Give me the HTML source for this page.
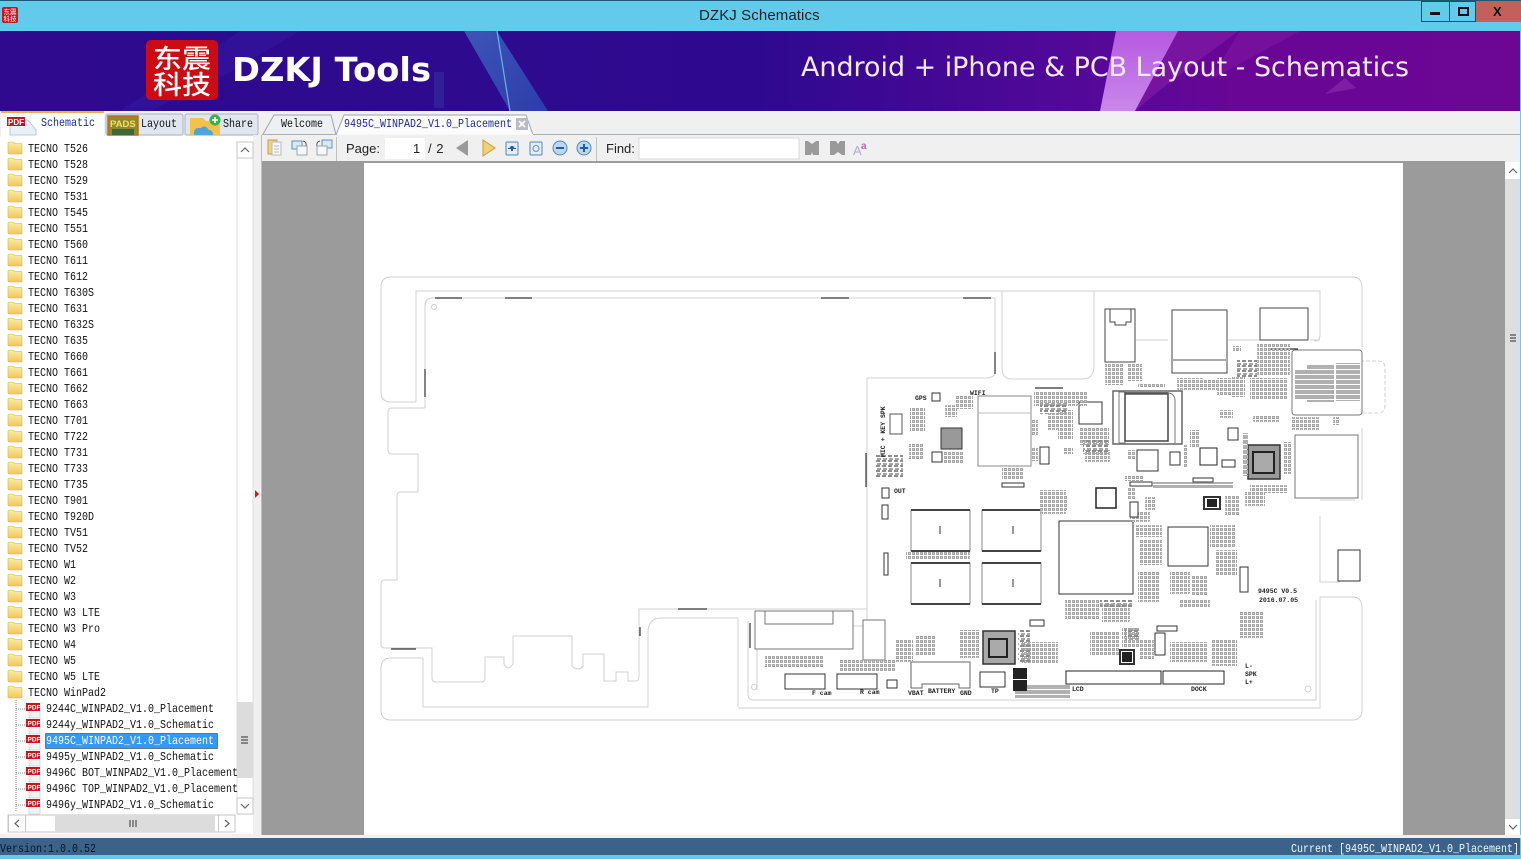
<!DOCTYPE html>
<html><head><meta charset="utf-8"><title>DZKJ Schematics</title>
<style>
html,body{margin:0;padding:0;width:1521px;height:859px;overflow:hidden;background:#f0f0f0}
body{position:relative;font-family:"Liberation Mono","Noto Sans CJK SC",monospace}
.a{position:absolute}
.t{position:absolute;margin-top:2px;font:10px/16px "Liberation Mono",monospace;color:#111;white-space:pre;transform-origin:0 50%;transform:scaleY(1.15)}
svg{position:absolute;left:0;top:0}
</style></head><body>

<div class="a" style="left:0;top:0;width:1521px;height:31px;background:#62cbec;border-top:1px solid #1b5a72;box-sizing:border-box"></div>
<div class="a" style="left:0;top:31px;width:1520px;height:80px;background:linear-gradient(90deg,#2f0a8e 0%,#2d0a8e 30%,#2e0990 50%,#520898 70%,#6a0696 82%,#6b0695 100%)"></div>
<div class="a" style="left:699px;top:6px;font:15px/20px 'Liberation Sans',sans-serif;letter-spacing:.1px;color:#222">DZKJ Schematics</div>

<svg width="1521" height="859" viewBox="0 0 1521 859">
<defs>
<linearGradient id="fold" x1="0" y1="0" x2="0" y2="1"><stop offset="0" stop-color="#fdeea8"/><stop offset="1" stop-color="#f1c75a"/></linearGradient>
<linearGradient id="beam" x1="0" y1="0" x2="1" y2="1"><stop offset="0" stop-color="#4d9fe0"/><stop offset="1" stop-color="#2c6fc8"/></linearGradient>
<linearGradient id="pink" x1="0" y1="0" x2="0" y2="1"><stop offset="0" stop-color="#b65ae0"/><stop offset="1" stop-color="#c987ea"/></linearGradient>
<pattern id="p1" width="6" height="5" patternUnits="userSpaceOnUse"><rect x="0" y="0" width="4" height="2" fill="#8c8c8c"/><rect x="1" y="3" width="4" height="2" fill="#a5a5a5"/></pattern>
<pattern id="p3" width="4" height="5" patternUnits="userSpaceOnUse"><rect x="0" y="0" width="4" height="4" fill="#b0b0b0"/></pattern>
<pattern id="p4" width="4" height="4" patternUnits="userSpaceOnUse"><rect x="0" y="0" width="3" height="3" fill="#a6a6a6"/><rect x="1" y="1" width="1" height="1" fill="#d4d4d4"/></pattern>
<g id="folder"><path d="M0 3.5 Q0 2 1.5 2 H5 L6.5 3.5 H13 Q14 3.5 14 5 V13 Q14 14 13 14 H1 Q0 14 0 13Z" fill="url(#fold)" stroke="#d9b04d" stroke-width=".6"/></g>
<g id="pdf"><rect x="3" y="5" width="11" height="10" fill="#eef3f8" stroke="#b8c8d8" stroke-width=".6"/><rect x="0" y="0" width="14" height="8" fill="#c9141c"/><text x="1.5" y="6.5" font-family="Liberation Sans" font-size="6.5" font-weight="700" fill="#fff">PDF</text></g>
</defs>

<!-- banner art -->
<path d="M240 31 L300 31 L225 75 L150 111 H120Z" fill="#3a1fb0" opacity=".35"/>
<path d="M464 31 H497 L548 111 H510Z" fill="url(#beam)" opacity=".5"/>
<path d="M497 31 L510 111" stroke="#6fd2f0" stroke-width="1.2" fill="none" opacity=".8"/>
<path d="M434 72 h10 v36 h-10z" fill="#3f7fc8" opacity=".18"/>
<path d="M1116 31 H1178 L1135 111 H1100Z" fill="url(#pink)"/>
<path d="M1178 31 H1238 L1160 90 L1135 111Z" fill="#8b1fa8" opacity=".55"/>
<path d="M1240 31 H1300 L1210 80Z" fill="#8b1fa8" opacity=".4"/>
<path d="M1325 94 L1345 78 L1356 88Z" fill="#8c2eb0" opacity=".6"/>

<!-- logo -->
<rect x="146" y="40" width="72" height="60" rx="5" fill="#cc0b12"/>
<text x="153" y="68" font-family="Noto Sans CJK SC" font-size="26" font-weight="500" fill="#fff" textLength="58" lengthAdjust="spacingAndGlyphs">东震</text>
<text x="153" y="94" font-family="Noto Sans CJK SC" font-size="26" font-weight="500" fill="#fff" textLength="58" lengthAdjust="spacingAndGlyphs">科技</text>
<text x="232" y="81" font-family="DejaVu Sans" font-size="33" font-weight="700" fill="#fff" textLength="199" lengthAdjust="spacingAndGlyphs">DZKJ Tools</text>
<text x="801" y="76" font-family="DejaVu Sans" font-size="27" fill="#f4eafc" textLength="608" lengthAdjust="spacingAndGlyphs">Android + iPhone &amp; PCB Layout - Schematics</text>

<!-- window controls -->
<rect x="1421.5" y="1.5" width="28" height="20" fill="#62cbec" stroke="#1b4f63"/>
<rect x="1449.5" y="1.5" width="26" height="20" fill="#62cbec" stroke="#1b4f63"/>
<rect x="1476" y="1" width="45" height="21" fill="#c4605a"/>
<rect x="1430" y="12" width="10" height="3" fill="#111"/>
<rect x="1459" y="8" width="9" height="7" fill="none" stroke="#111" stroke-width="2"/>
<text x="1493" y="16" font-family="Liberation Sans" font-size="13" font-weight="700" fill="#111">X</text>
<!-- small app icon -->
<rect x="2" y="7" width="16" height="16" rx="2" fill="#c9141c"/>
<text x="3.5" y="14" font-family="Noto Sans CJK SC" font-size="6.5" fill="#fff">东震</text>
<text x="3.5" y="21" font-family="Noto Sans CJK SC" font-size="6.5" fill="#fff">科技</text>

<!-- left tabs -->
<rect x="106" y="114" width="77" height="21" rx="2" fill="#dfe6ef" stroke="#a9b4c0"/>
<rect x="185" y="114" width="73" height="21" rx="2" fill="#dfe6ef" stroke="#a9b4c0"/>
<rect x="1" y="112" width="103" height="24" fill="#fff"/>
<rect x="1" y="111" width="103" height="2" fill="#f0b040"/>
<path d="M10 120 H28 L36 130 V135 H10Z" fill="#e8eff6" stroke="#b8c8d8"/>
<rect x="7" y="117" width="18" height="9" fill="#c9141c"/>
<text x="8" y="125" font-family="Liberation Sans" font-size="8" font-weight="700" fill="#fff">PDF</text>
<rect x="108" y="116" width="30" height="19" fill="#8f8a30" stroke="#c56a18" stroke-width="1.5"/>
<text x="110" y="127" font-family="Liberation Sans" font-size="9.5" font-weight="700" fill="#f5e060">PADS</text>
<rect x="112" y="129" width="22" height="6" fill="#3a6a3a"/>
<path d="M190 118 H203 L206 121 H220 V135 H190Z" fill="#f3c24a"/>
<path d="M194 135 Q193 127 201 128 Q205 124 209 130 Q213 130 213 135Z" fill="#4ba6e0"/>
<circle cx="215" cy="120" r="5.5" fill="#3fae4c"/><path d="M212 120h6M215 117v6" stroke="#fff" stroke-width="1.6"/>

<!-- doc tabs -->
<path d="M262.5 135 L274 115 H331 L336 135" fill="#eef1f4" stroke="#9aa5b0"/>
<path d="M336 135 L344 115 H526 L533 135" fill="#fbfbfb" stroke="#9aa5b0"/>
<rect x="516" y="118" width="12" height="12" fill="#b6bcc4"/><path d="M519 121l6 6M525 121l-6 6" stroke="#fff" stroke-width="1.6"/>
<rect x="262" y="134" width="1259" height="1" fill="#a8b0b8"/>
<rect x="337" y="134" width="196" height="1" fill="#f6f6f6"/>

<!-- toolbar icons -->
<g fill="none">
<rect x="268" y="140" width="9" height="14" fill="#f3d184" stroke="#c99a40"/><rect x="272" y="142" width="9" height="13" fill="#f4f6f8" stroke="#b5bcc4"/><path d="M274 146h5M274 149h5M274 152h5" stroke="#b5bcc4"/>
<rect x="292" y="141" width="10" height="8" fill="#d7e8f7" stroke="#5e8fb8"/><rect x="297" y="146" width="10" height="9" fill="#f5f6f8" stroke="#9aa5b0"/><path d="M303 141q4 1 3 5" stroke="#555"/>
<rect x="322" y="140" width="10" height="8" fill="#d7e8f7" stroke="#5e8fb8"/><rect x="317" y="146" width="10" height="9" fill="#f5f6f8" stroke="#9aa5b0"/><path d="M320 141q-4 1 -3 5" stroke="#555"/>
<path d="M336.5 137v24" stroke="#c3c3c3"/>
<path d="M596.5 137v24" stroke="#c3c3c3"/>
</g>
<rect x="385" y="138" width="40" height="21" fill="#fff"/>
<path d="M468 140 V156 L456 148Z" fill="#9a9a9a"/>
<path d="M483 140 V156 L495 148Z" fill="#f1d27a" stroke="#c79a2e"/>
<rect x="506" y="142" width="12" height="13" rx="1" fill="#e3edf7" stroke="#4e86bd"/><path d="M508 148.5h3l-1-2M516 148.5h-3l1-2" stroke="#1f5fa0" fill="none"/><rect x="511" y="146" width="2" height="5" fill="#1f5fa0"/>
<rect x="530" y="142" width="12" height="13" rx="1" fill="#e3edf7" stroke="#4e86bd"/><circle cx="536" cy="148.5" r="3" fill="none" stroke="#5e8fb8"/>
<circle cx="560" cy="148" r="7" fill="#bcd6ec" stroke="#4e86bd"/><rect x="556" y="147" width="8" height="2" fill="#1c5fa8"/>
<circle cx="584" cy="148" r="7" fill="#bcd6ec" stroke="#4e86bd"/><path d="M580 148h8M584 144v8" stroke="#1c5fa8" stroke-width="2"/>
<rect x="639" y="138" width="160" height="21" fill="#fff" stroke="#d8d8d8"/>
<path d="M805 141 h3 l4 3 l4 -3 h3 v14 h-6 l-1 -3 l-1 3 h-6z" fill="#9a9a9a"/>
<path d="M830 141 h6 l2 3 l2 -3 h5 v14 h-3 l-4 -3 l-4 3 h-4z" fill="#9a9a9a"/>
<text x="853" y="155" font-family="Liberation Sans" font-size="13" fill="#b9a4de">A</text>
<text x="861" y="149" font-family="Liberation Sans" font-size="10" font-weight="700" fill="#c65fb8">a</text>

<!-- content area -->
<rect x="262" y="161" width="1243" height="674" fill="#9b9b9b"/>
<rect x="364" y="163" width="1039" height="672" fill="#fff"/>
<rect x="1505" y="162" width="15" height="673" fill="#dedede"/>
<rect x="1505" y="162" width="15" height="17" fill="#fff"/>
<rect x="1505" y="819" width="15" height="16" fill="#fff"/>
<path d="M1509 173l4-4 4 4M1509 825l4 4 4-4" fill="none" stroke="#666" stroke-width="1.2"/>
<path d="M1510 335h6M1510 338h6M1510 341h6" stroke="#666" stroke-width="1.5"/>
<rect x="1520" y="31" width="1" height="828" fill="#62cbec"/>

<!-- left panel -->
<rect x="0" y="136" width="253" height="698" fill="#fff"/>
<rect x="253" y="135" width="8" height="700" fill="#f0f0f0"/>
<path d="M255 490l4 4 -4 4z" fill="#d8121a"/>
<rect x="261" y="135" width="1" height="700" fill="#bfbfbf"/>

<!-- tree scrollbars -->
<rect x="237" y="142" width="16" height="672" fill="#fff" stroke="#dcdcdc"/>
<rect x="237" y="142" width="16" height="16" fill="#fff" stroke="#c6c6c6"/>
<rect x="237" y="702" width="16" height="76" fill="#dcdcdc"/>
<rect x="237" y="798" width="16" height="16" fill="#fff" stroke="#c6c6c6"/>
<path d="M241 152l4-4 4 4M241 804l4 4 4-4" fill="none" stroke="#666" stroke-width="1.2"/>
<path d="M241 737h7M241 740h7M241 743h7" stroke="#666" stroke-width="1.4"/>
<rect x="8" y="815" width="227" height="17" fill="#fff" stroke="#c6c6c6"/>
<rect x="55" y="815" width="160" height="17" fill="#dcdcdc"/>
<path d="M8.5 815v17M25.5 815v17M218.5 815v17" stroke="#c6c6c6"/>
<path d="M19 820l-4 3.5 4 3.5M225 820l4 3.5 -4 3.5" fill="none" stroke="#666" stroke-width="1.2"/>
<path d="M130 820v7M133 820v7M136 820v7" stroke="#666" stroke-width="1.4"/>

<!-- folders -->
<g transform="translate(0,-1)">
<use href="#folder" x="8" y="141"/><use href="#folder" x="8" y="157"/><use href="#folder" x="8" y="173"/><use href="#folder" x="8" y="189"/><use href="#folder" x="8" y="205"/><use href="#folder" x="8" y="221"/><use href="#folder" x="8" y="237"/><use href="#folder" x="8" y="253"/><use href="#folder" x="8" y="269"/><use href="#folder" x="8" y="285"/><use href="#folder" x="8" y="301"/><use href="#folder" x="8" y="317"/><use href="#folder" x="8" y="333"/><use href="#folder" x="8" y="349"/><use href="#folder" x="8" y="365"/><use href="#folder" x="8" y="381"/><use href="#folder" x="8" y="397"/><use href="#folder" x="8" y="413"/><use href="#folder" x="8" y="429"/><use href="#folder" x="8" y="445"/><use href="#folder" x="8" y="461"/><use href="#folder" x="8" y="477"/><use href="#folder" x="8" y="493"/><use href="#folder" x="8" y="509"/><use href="#folder" x="8" y="525"/><use href="#folder" x="8" y="541"/><use href="#folder" x="8" y="557"/><use href="#folder" x="8" y="573"/><use href="#folder" x="8" y="589"/><use href="#folder" x="8" y="605"/><use href="#folder" x="8" y="621"/><use href="#folder" x="8" y="637"/><use href="#folder" x="8" y="653"/><use href="#folder" x="8" y="669"/><use href="#folder" x="8" y="685"/>
</g>
<path d="M16 700V812M16 709h10M16 725h10M16 741h10M16 757h10M16 773h10M16 789h10M16 805h10" stroke="#888" stroke-dasharray="1 1" fill="none"/>
<use href="#pdf" x="26" y="703"/><use href="#pdf" x="26" y="719"/><use href="#pdf" x="26" y="735"/><use href="#pdf" x="26" y="751"/><use href="#pdf" x="26" y="767"/><use href="#pdf" x="26" y="783"/><use href="#pdf" x="26" y="799"/>
<rect x="45.5" y="733.5" width="172" height="15" fill="#3399ff" stroke="#222" stroke-dasharray="1 1"/>

<!-- status -->
<rect x="0" y="838" width="1520" height="17" fill="#3c6289"/>
<rect x="0" y="855" width="1521" height="4" fill="#62cbec"/>
<rect x="0" y="835" width="1521" height="3" fill="#f0f0f0"/>

<!-- PCB outlines -->
<g fill="none" stroke="#d0d0d0" stroke-width="1">
<path d="M416 402 H391 Q381 402 381 392 V287 Q381 277 391 277 H1352 Q1362 277 1362 287 V347"/>
<path d="M416 402 V291 H1320 V335 Q1320 341 1314 341"/>
<path d="M425 408 V306 Q425 298 433 298 H995 V372 Q995 378 985 378 H867"/>
<path d="M1002 291 V368 Q1002 379 1012 379 H1082 Q1094 379 1094 366 V291"/>
<path d="M425 408 H392 Q388 408 388 412 V450 Q388 454 392 454 H418 V492 H401 Q397 492 397 496 V580 H385 Q381 580 381 584 V644 Q381 648 385 648 H432 V678 Q432 682 436 682 H481 Q485 682 485 678 V657 H504 V664 Q508 672 513 664 V636 H572 V666 Q578 672 583 666 V654 H604 V681 H616 V672 H628 V681 H636 Q639 681 639 676 V609 H867"/>
<path d="M423 658 H391 Q381 658 381 668 V710 Q381 720 391 720 H1352 Q1362 720 1362 710 V607 Q1362 597 1352 597 H1320 V708 H738"/>
<path d="M423 658 V707 H648 V630 Q650 618 660 618 H738 V707"/>
<path d="M867 378 V620 Q867 626 860 626 H757 V690"/>
<path d="M1320 516 V582 H1340 M1320 500 H1355"/>
<path d="M1362 500 V428"/>
<path d="M1360 361 H1378 Q1385 361 1385 368 V405 Q1385 413 1378 413 H1360" stroke-dasharray="4 2"/>
<path d="M1136 340 H1168 M1228 340 H1260 M1310 340 H1320"/>
<path d="M748 621 V694 Q748 700 754 700 H1316 V600"/>
<circle cx="434" cy="307" r="2.5"/><circle cx="1308" cy="689" r="3"/>
<circle cx="754" cy="687" r="2.5"/>
</g>
<g stroke="#333" stroke-width="1.2" fill="none">
<path d="M435 298h27M505 298h27M821 298h28M963 298h28M425 369v28M995 352v22M391 649h25M678 609h29M640 627v9M866 453v34M750 623v25M1035 388h28M1271 349h27"/>
</g>

<!-- PCB major -->
<g fill="#fff" stroke="#444" stroke-width="1">
<rect x="978" y="396" width="53" height="70" stroke="#888"/><path d="M978 413H1031" stroke="#bbb"/>
<rect x="1248" y="445" width="32" height="34" fill="#9a9a9a" stroke="#333" stroke-width="1.5"/>
<rect x="1253" y="452" width="21" height="21" fill="#aaa" stroke="#222" stroke-width="2"/>
<rect x="1059" y="521" width="74" height="73" stroke="#333"/>
<rect x="1168" y="527" width="40" height="39" stroke="#333"/>
<rect x="911" y="510" width="59" height="41" stroke="#888"/><path d="M911 510H970M911 551H970" stroke="#444" stroke-width="2"/>
<rect x="982" y="510" width="59" height="41" stroke="#888"/><path d="M982 510H1041M982 551H1041" stroke="#444" stroke-width="2"/>
<rect x="911" y="563" width="59" height="41" stroke="#888"/><path d="M911 563H970M911 604H970" stroke="#444" stroke-width="2"/>
<rect x="982" y="563" width="59" height="41" stroke="#888"/><path d="M982 563H1041M982 604H1041" stroke="#444" stroke-width="2"/>
<path d="M940 526v8M1013 526v8M940 579v8M1013 579v8" stroke="#999" stroke-width="2"/>
<rect x="1113" y="391" width="69" height="53" stroke="#666" stroke-width="1.5"/>
<rect x="1119" y="392" width="6" height="51" stroke="#777"/>
<rect x="1125" y="393" width="43" height="48" stroke="#444" stroke-width="1.5"/>
<path d="M1125 393.5H1168" stroke="#555" stroke-width="2.5"/>
<path d="M1168 393 Q1174 393 1175 400 V443" stroke="#777" fill="none"/>
<path d="M1105 309 H1135 V362 H1105Z M1110 309 V322 H1115 V325 H1126 V322 H1131 V309" />
<rect x="1172" y="310" width="55" height="63"/>
<path d="M1172 360 H1227" stroke="#aaa" stroke-width="2"/>
<rect x="1260" y="308" width="48" height="32"/>
<rect x="1292" y="350" width="70" height="65" rx="3" stroke="#777"/>
<path d="M1295 435 H1358 V498 H1295Z" stroke="#777"/>
<rect x="1338" y="550" width="22" height="31" stroke="#333"/>
<rect x="1096" y="488" width="20" height="20" stroke="#222" stroke-width="1.5"/>
<rect x="1066" y="671" width="95" height="13" stroke="#222"/>
<rect x="1163" y="671" width="61" height="13" stroke="#222"/>
<path d="M911 662 H970 V688 H959 V684 H922 V688 H911Z" stroke="#666"/>
<rect x="755" y="611" width="98" height="38" stroke="#777"/>
<rect x="765" y="611" width="68" height="13" stroke="#777"/>
<path d="M863 620 H885 V660 H863Z" stroke="#777"/>
<rect x="983" y="631" width="32" height="33" fill="#a8a8a8" stroke="#333" stroke-width="1.5"/>
<rect x="989" y="639" width="18" height="18" fill="#aaa" stroke="#222" stroke-width="2"/>
<rect x="1079" y="402" width="23" height="22" stroke="#333"/>
<rect x="1137" y="450" width="21" height="21" stroke="#333"/>
<rect x="1200" y="448" width="17" height="17" stroke="#222"/>
<rect x="1228" y="428" width="10" height="12" stroke="#333"/>
<rect x="941" y="428" width="21" height="21" fill="#999" stroke="#333"/>
<rect x="1040" y="447" width="9" height="17" stroke="#333"/>
<rect x="932" y="393" width="8" height="8" stroke="#333"/>
<rect x="890" y="414" width="12" height="20" stroke="#555"/>
<rect x="932" y="452" width="10" height="10" stroke="#333"/>
</g>
<g fill="url(#p3)">
<rect x="1295" y="370" width="12" height="30"/><rect x="1307" y="365" width="27" height="37"/><rect x="1336" y="363" width="24" height="38"/>
<rect x="1015" y="684" width="55" height="14"/><rect x="1153" y="482" width="80" height="6"/><rect x="1243" y="433" width="5" height="43"/>
</g>
<g fill="url(#p4)">
<rect x="1105" y="363" width="18" height="22"/><rect x="1128" y="363" width="14" height="18"/><rect x="1138" y="383" width="27" height="5"/><rect x="1177" y="378" width="27" height="12"/><rect x="1204" y="380" width="13" height="10"/><rect x="1217" y="378" width="15" height="18"/><rect x="1232" y="377" width="13" height="20"/><rect x="1233" y="346" width="8" height="6"/><rect x="1257" y="343" width="33" height="33"/><rect x="1250" y="378" width="37" height="22"/><rect x="1220" y="410" width="13" height="8"/><rect x="1253" y="415" width="27" height="7"/><rect x="1292" y="417" width="28" height="13"/><rect x="1333" y="417" width="7" height="8"/><rect x="1190" y="430" width="10" height="17"/><rect x="1183" y="445" width="5" height="22"/><rect x="1283" y="442" width="8" height="32"/><rect x="1250" y="485" width="38" height="8"/><rect x="1128" y="488" width="8" height="12"/><rect x="1125" y="475" width="18" height="6"/><rect x="1127" y="450" width="8" height="10"/>
<rect x="910" y="408" width="15" height="23"/><rect x="909" y="443" width="15" height="17"/><rect x="944" y="452" width="20" height="12"/><rect x="1034" y="392" width="53" height="14"/><rect x="1031" y="420" width="7" height="15"/><rect x="1047" y="413" width="13" height="17"/><rect x="1058" y="410" width="15" height="30"/><rect x="1079" y="428" width="30" height="17"/><rect x="1031" y="447" width="7" height="14"/><rect x="1063" y="447" width="10" height="7"/><rect x="1002" y="467" width="22" height="13"/><rect x="1085" y="450" width="25" height="12"/><rect x="955" y="395" width="18" height="14"/><rect x="945" y="405" width="12" height="12"/>
<rect x="1060" y="496" width="8" height="14"/><rect x="1130" y="512" width="20" height="10"/><rect x="1136" y="525" width="26" height="12"/><rect x="1140" y="540" width="22" height="25"/><rect x="1210" y="525" width="25" height="22"/><rect x="1215" y="550" width="22" height="25"/><rect x="1225" y="495" width="15" height="20"/><rect x="1245" y="492" width="20" height="14"/><rect x="1138" y="572" width="22" height="30"/><rect x="1170" y="572" width="20" height="22"/><rect x="1192" y="575" width="16" height="20"/><rect x="1180" y="600" width="30" height="8"/><rect x="1065" y="600" width="35" height="20"/><rect x="1102" y="604" width="28" height="18"/><rect x="1090" y="632" width="30" height="24"/><rect x="1122" y="628" width="18" height="20"/><rect x="1140" y="640" width="14" height="20"/><rect x="1240" y="612" width="24" height="26"/><rect x="1170" y="642" width="38" height="20"/><rect x="1212" y="640" width="25" height="26"/><rect x="1022" y="642" width="36" height="22"/><rect x="960" y="630" width="20" height="28"/><rect x="915" y="635" width="20" height="20"/><rect x="895" y="640" width="18" height="22"/><rect x="765" y="655" width="58" height="12"/><rect x="840" y="660" width="56" height="12"/><rect x="906" y="552" width="64" height="7"/><rect x="1040" y="490" width="26" height="24"/><rect x="1145" y="497" width="11" height="13"/></g>
<g fill="url(#p1)">
<rect x="875" y="455" width="28" height="22"/><rect x="1040" y="402" width="28" height="12"/><rect x="1125" y="628" width="14" height="12"/><rect x="1100" y="600" width="32" height="8"/><rect x="1018" y="630" width="12" height="32"/><rect x="1237" y="360" width="20" height="17"/><rect x="1083" y="440" width="25" height="14"/></g>
<g fill="#fff" stroke="#333" stroke-width="1"><rect x="1130" y="482" width="22" height="4"/><rect x="1193" y="478" width="20" height="4"/><rect x="1222" y="460" width="13" height="7"/><rect x="1170" y="452" width="10" height="13"/><rect x="1002" y="483" width="22" height="4"/><rect x="1130" y="502" width="8" height="15"/><rect x="1204" y="497" width="16" height="12" stroke-width="2"/><rect x="1240" y="567" width="8" height="25"/><rect x="1155" y="633" width="10" height="22"/><rect x="1120" y="650" width="14" height="14" stroke-width="2"/><rect x="1030" y="620" width="14" height="6"/><rect x="1157" y="626" width="20" height="5"/><rect x="882" y="488" width="7" height="10"/><rect x="882" y="505" width="6" height="14"/><rect x="884" y="553" width="4" height="22"/><rect x="785" y="674" width="40" height="15"/><rect x="837" y="674" width="40" height="15"/><rect x="887" y="680" width="10" height="8"/><rect x="980" y="672" width="25" height="15"/></g>
<g fill="#222"><rect x="1013" y="668" width="14" height="11"/><rect x="1013" y="680" width="14" height="11"/><rect x="1207" y="499" width="10" height="8"/><rect x="1122" y="652" width="10" height="10"/></g>
<g font-family="Liberation Mono" font-size="6.5" font-weight="700" fill="#222">
<text x="1258" y="593">9495C V0.5</text><text x="1259" y="602">2016.07.05</text>
<text x="970" y="395">WIFI</text><text x="915" y="400">GPS</text><text x="894" y="493">OUT</text><text x="1072" y="691">LCD</text><text x="1191" y="691">DOCK</text><text x="928" y="693">BATTERY</text><text x="908" y="695">VBAT</text><text x="960" y="695">GND</text><text x="991" y="693">TP</text><text x="812" y="695">F cam</text><text x="860" y="694">R cam</text><text x="1245" y="676">SPK</text><text x="1245" y="668">L-</text><text x="1245" y="684">L+</text>
<text transform="translate(885,457) rotate(-90)">MIC + KEY SPK</text>
</g>
</svg>

<!-- Tab labels -->
<div class="t" style="left:41px;top:115px;color:#1a2a9a">Schematic</div>
<div class="t" style="left:141px;top:116px">Layout</div>
<div class="t" style="left:223px;top:116px">Share</div>
<div class="t" style="left:281px;top:116px">Welcome</div>
<div class="t" style="left:344px;top:116px;color:#1a2a9a">9495C_WINPAD2_V1.0_Placement</div>
<div class="a" style="left:346px;top:140px;font:13px/17px 'Liberation Sans',sans-serif;color:#222">Page:</div>
<div class="a" style="left:413px;top:140px;font:13px/17px 'Liberation Sans',sans-serif;color:#222">1</div>
<div class="a" style="left:428px;top:140px;font:13px/17px 'Liberation Sans',sans-serif;letter-spacing:.5px;color:#222">/ 2</div>
<div class="a" style="left:606px;top:140px;font:13px/17px 'Liberation Sans',sans-serif;color:#222">Find:</div>

<div class="t" style="left:28px;top:141px">TECNO T526</div>
<div class="t" style="left:28px;top:157px">TECNO T528</div>
<div class="t" style="left:28px;top:173px">TECNO T529</div>
<div class="t" style="left:28px;top:189px">TECNO T531</div>
<div class="t" style="left:28px;top:205px">TECNO T545</div>
<div class="t" style="left:28px;top:221px">TECNO T551</div>
<div class="t" style="left:28px;top:237px">TECNO T560</div>
<div class="t" style="left:28px;top:253px">TECNO T611</div>
<div class="t" style="left:28px;top:269px">TECNO T612</div>
<div class="t" style="left:28px;top:285px">TECNO T630S</div>
<div class="t" style="left:28px;top:301px">TECNO T631</div>
<div class="t" style="left:28px;top:317px">TECNO T632S</div>
<div class="t" style="left:28px;top:333px">TECNO T635</div>
<div class="t" style="left:28px;top:349px">TECNO T660</div>
<div class="t" style="left:28px;top:365px">TECNO T661</div>
<div class="t" style="left:28px;top:381px">TECNO T662</div>
<div class="t" style="left:28px;top:397px">TECNO T663</div>
<div class="t" style="left:28px;top:413px">TECNO T701</div>
<div class="t" style="left:28px;top:429px">TECNO T722</div>
<div class="t" style="left:28px;top:445px">TECNO T731</div>
<div class="t" style="left:28px;top:461px">TECNO T733</div>
<div class="t" style="left:28px;top:477px">TECNO T735</div>
<div class="t" style="left:28px;top:493px">TECNO T901</div>
<div class="t" style="left:28px;top:509px">TECNO T920D</div>
<div class="t" style="left:28px;top:525px">TECNO TV51</div>
<div class="t" style="left:28px;top:541px">TECNO TV52</div>
<div class="t" style="left:28px;top:557px">TECNO W1</div>
<div class="t" style="left:28px;top:573px">TECNO W2</div>
<div class="t" style="left:28px;top:589px">TECNO W3</div>
<div class="t" style="left:28px;top:605px">TECNO W3 LTE</div>
<div class="t" style="left:28px;top:621px">TECNO W3 Pro</div>
<div class="t" style="left:28px;top:637px">TECNO W4</div>
<div class="t" style="left:28px;top:653px">TECNO W5</div>
<div class="t" style="left:28px;top:669px">TECNO W5 LTE</div>
<div class="t" style="left:28px;top:685px">TECNO WinPad2</div>
<div class="t" style="left:46px;top:701px">9244C_WINPAD2_V1.0_Placement</div>
<div class="t" style="left:46px;top:717px">9244y_WINPAD2_V1.0_Schematic</div>
<div class="t" style="left:46px;top:733px;color:#fff">9495C_WINPAD2_V1.0_Placement</div>
<div class="t" style="left:46px;top:749px">9495y_WINPAD2_V1.0_Schematic</div>
<div class="a" style="left:46px;top:765px;width:191px;height:18px;overflow:hidden"><div class="t" style="left:0;top:0">9496C BOT_WINPAD2_V1.0_Placement</div></div>
<div class="a" style="left:46px;top:781px;width:191px;height:18px;overflow:hidden"><div class="t" style="left:0;top:0">9496C TOP_WINPAD2_V1.0_Placement</div></div>
<div class="t" style="left:46px;top:797px">9496y_WINPAD2_V1.0_Schematic</div>

<div class="t" style="left:0;top:841px;color:#0c1420">Version:1.0.0.52</div>
<div class="t" style="left:1291px;top:841px;color:#f2f6fa">Current [9495C_WINPAD2_V1.0_Placement]</div>
</body></html>
